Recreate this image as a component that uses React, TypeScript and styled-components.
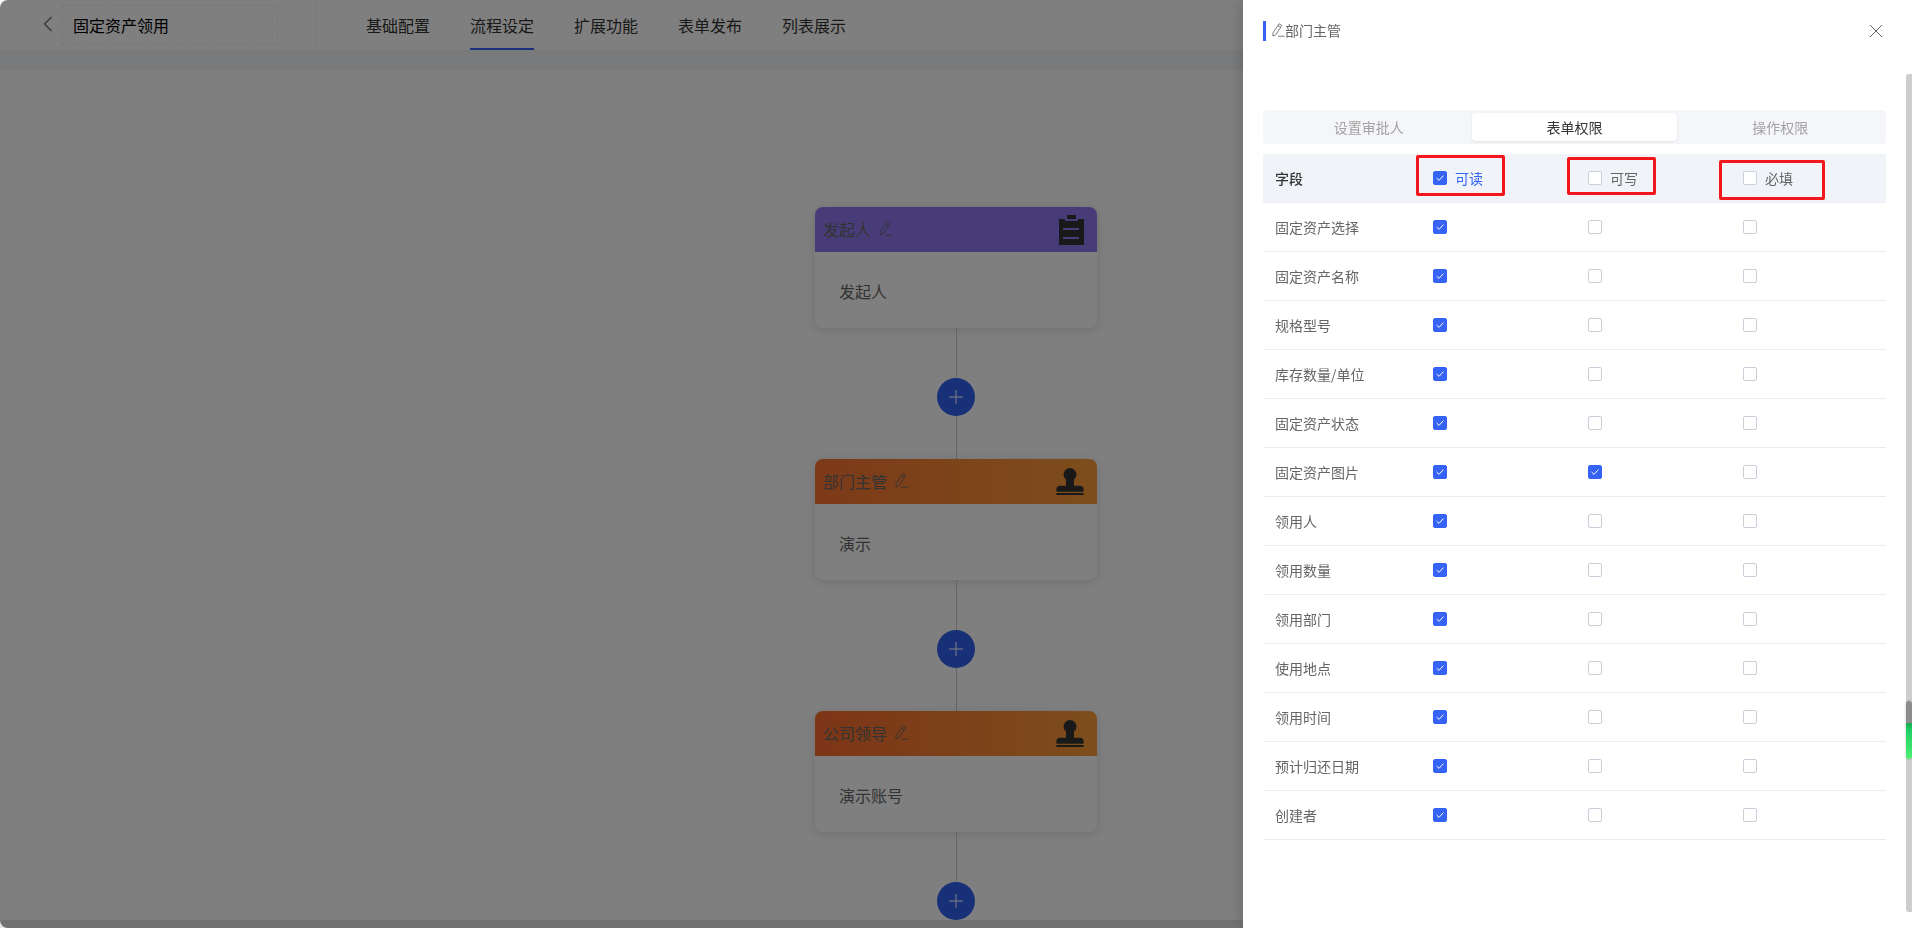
import React from 'react';
import styled, { createGlobalStyle } from 'styled-components';

const GlobalStyle = createGlobalStyle`
    html, body {
        margin: 0;
        padding: 0;
        height: 100%;
        overflow: hidden;
        background: #fff;
        font-family: "Noto Sans CJK SC", "Noto Sans", sans-serif;
    }
    * {
        box-sizing: border-box;
    }
`;

const PageContainer = styled.div`
    width: 1912px;
    height: 928px;
    display: flex;
    flex-direction: column;
    overflow: hidden;
    background: #fff;
`;

const TopBar = styled.div`
    height: 50px;
    display: flex;
    background: #fff;
    flex-shrink: 0;
`;

const BackArea = styled.div`
    width: 317px;
    display: flex;
    align-items: center;
    padding: 0 0 0 43px;
    gap: 9px;
    border-right: 1px solid #f0f0f0;
`;

const BackIcon = styled.svg`
    width: 10px;
    height: 16px;
    margin-top: -2px;
`;

const TitleBox = styled.div`
    width: 216px;
    height: 40px;
    border: 1px dashed #efefef;
    display: flex;
    align-items: center;
    padding: 0 0 1px 10px;
    color: #000;
    font-size: 16px;
`;

const NavList = styled.div`
    display: flex;
    gap: 40px;
    padding-left: 49px;
`;

const NavItem = styled.div<{ $active?: boolean }>`
    height: 50px;
    width: 64px;
    font-size: 16px;
    line-height: 50px;
    white-space: nowrap;
    color: #333;
    border-bottom: 2px solid ${(p) => (p.$active ? '#3563f5' : 'transparent')};
`;

const Strip = styled.div`
    height: 20px;
    background: #f0f4f6;
    flex-shrink: 0;
`;

const Canvas = styled.div`
    flex: 1;
    overflow: hidden;
    display: flex;
    flex-direction: column;
    align-items: center;
    padding-top: 137px;
`;

const HScrollBar = styled.div`
    height: 8px;
    background: #e2e2e2;
    flex-shrink: 0;
`;

const NodeCard = styled.div`
    width: 282px;
    height: 121px;
    flex-shrink: 0;
    border-radius: 8px;
    background: #fff;
    box-shadow: 0 2px 12px rgba(0, 0, 0, 0.14);
    overflow: hidden;
`;

const NodeHead = styled.div<{ $from: string; $to: string }>`
    height: 45px;
    display: flex;
    align-items: center;
    justify-content: space-between;
    padding: 0 13px 0 8px;
    background: linear-gradient(90deg, ${(p) => p.$from}, ${(p) => p.$to});
`;

const NodeTitle = styled.div`
    display: flex;
    align-items: center;
    gap: 8px;
    padding-bottom: 2px;
    font-size: 16px;
    color: #666;
`;

const NodeBody = styled.div`
    height: 76px;
    display: flex;
    align-items: center;
    padding: 2px 0 0 24px;
    font-size: 16px;
    color: #666;
`;

const Line = styled.div<{ $h: number }>`
    width: 1px;
    height: ${(p) => p.$h}px;
    background: #c9c9d6;
    flex-shrink: 0;
`;

const AddButton = styled.div`
    width: 38px;
    height: 38px;
    flex-shrink: 0;
    border-radius: 50%;
    background: #3060ee;
    display: flex;
    align-items: center;
    justify-content: center;
`;

const Mask = styled.div`
    position: fixed;
    inset: 0;
    border-radius: 8px 0 0 8px;
    background: rgba(0, 0, 0, 0.5);
`;

const Drawer = styled.div`
    position: fixed;
    top: 0;
    right: 0;
    bottom: 0;
    width: 669px;
    background: #fff;
    padding: 21px 26px 0 20px;
    box-shadow: -4px 0 12px rgba(0, 0, 0, 0.12);
`;

const DrawerHead = styled.div`
    height: 20px;
    display: flex;
    align-items: center;
    justify-content: space-between;
    border-left: 3px solid #3563f5;
    padding-left: 6px;
    margin-bottom: 69px;
`;

const DrawerTitle = styled.div`
    display: flex;
    align-items: center;
    padding-bottom: 2px;
    font-size: 14px;
    color: #666;
`;

const CloseIcon = styled.svg`
    width: 14px;
    height: 14px;
    margin-right: 3px;
`;

const TabsBar = styled.div`
    height: 34px;
    display: grid;
    grid-template-columns: repeat(3, 1fr);
    padding: 3px;
    border-radius: 4px;
    background: #f5f6f9;
    margin-bottom: 10px;
`;

const TabItem = styled.div<{ $active?: boolean }>`
    display: flex;
    align-items: center;
    justify-content: center;
    font-size: 14px;
    border-radius: 4px;
    color: ${(p) => (p.$active ? '#333' : '#a3a3a3')};
    background: ${(p) => (p.$active ? '#fff' : 'transparent')};
    box-shadow: ${(p) => (p.$active ? '0 1px 3px rgba(0, 0, 0, 0.08)' : 'none')};
`;

const TableRow = styled.div<{ $head?: boolean }>`
    height: 49px;
    display: grid;
    grid-template-columns: 158px 155px 156px 154px;
    align-items: center;
    font-size: 14px;
    color: #666;
    background: ${(p) => (p.$head ? '#f0f4f9' : '#fff')};
    border-bottom: 1px solid #ebecf2;
`;

const FieldName = styled.div<{ $head?: boolean }>`
    padding-left: 12px;
    color: ${(p) => (p.$head ? '#333' : '#666')};
    font-weight: ${(p) => (p.$head ? 500 : 400)};
`;

const CheckCell = styled.div<{ $on?: boolean; $shift?: boolean }>`
    display: flex;
    align-items: center;
    gap: 8px;
    padding-left: ${(p) => (p.$shift ? 11 : 12)}px;
    color: ${(p) => (p.$on ? '#3563f5' : '#666')};
`;

const CheckBox = styled.span<{ $on?: boolean }>`
    width: 14px;
    height: 14px;
    border-radius: 2px;
    display: inline-flex;
    align-items: center;
    justify-content: center;
    background: ${(p) => (p.$on ? '#3563f5' : '#fff')};
    border: 1px solid ${(p) => (p.$on ? '#3563f5' : '#ccced9')};
`;

const RedBox = styled.div<{ $x: number; $y: number; $w: number; $h: number }>`
    position: absolute;
    left: ${(p) => p.$x}px;
    top: ${(p) => p.$y}px;
    width: ${(p) => p.$w}px;
    height: ${(p) => p.$h}px;
    border: 3px solid #f5151a;
    border-radius: 2px;
`;

const ScrollTrack = styled.div`
    position: absolute;
    top: 74px;
    right: 0;
    bottom: 16px;
    width: 6px;
    background: #cdcdcd;
    border-radius: 3px 0 0 3px;
`;

const ScrollThumb = styled.div`
    position: absolute;
    top: 627px;
    left: 0;
    width: 6px;
    height: 58px;
    border-radius: 3px;
    overflow: hidden;
    background: linear-gradient(180deg, #8c8c8c 0, #8c8c8c 38%, #17a850 38%, #1fcf66 50%, #4df070 100%);
    box-shadow: 0 0 3px rgba(0, 0, 0, 0.2);
`;

const PencilIcon: React.FC<{ size?: number; color?: string }> = ({ size = 14, color = '#666' }) => (
    <svg width={size} height={size + 1} viewBox="0 0 14 15" fill="none" stroke={color} strokeWidth="0.9">
        <path d="M7.6 0.8 L10.6 2.6 L4.2 12.6 L1 14 L1 10.6 Z" strokeLinejoin="round" />
        <path d="M6.3 2.8 L9.3 4.6" />
        <path d="M6.5 14.2 H13.6" />
    </svg>
);

const ClipboardIcon: React.FC = () => (
    <svg width="25" height="30" viewBox="0 0 25 30">
        <rect x="8" y="0" width="9" height="4" rx="0.5" fill="#333" />
        <path
            fill="#333"
            fillRule="evenodd"
            d="M0 4 H6 V6 H19 V4 H25 V30 H0 Z M4 13 V15 H20 V13 Z M4 22 V24 H20 V22 Z"
        />
    </svg>
);

const StampIcon: React.FC = () => (
    <svg width="28" height="28" viewBox="0 0 28 28" fill="#333">
        <circle cx="14" cy="6.5" r="6.5" />
        <rect x="10" y="8" width="8" height="11" />
        <path d="M4 17.7 H24 C26.2 17.7 27.6 19.2 27.6 21 V23.7 H0.4 V21 C0.4 19.2 1.8 17.7 4 17.7 Z" />
        <rect x="0.4" y="25" width="27.2" height="2" />
    </svg>
);

const CheckMark: React.FC = () => (
    <svg width="10" height="10" viewBox="0 0 10 10" fill="none" stroke="#fff" strokeWidth="1">
        <path d="M1.6 5 L4 7.4 L8.4 2.6" />
    </svg>
);

const fields = [
    { name: '固定资产选择' },
    { name: '固定资产名称' },
    { name: '规格型号' },
    { name: '库存数量/单位' },
    { name: '固定资产状态' },
    { name: '固定资产图片', write: true },
    { name: '领用人' },
    { name: '领用数量' },
    { name: '领用部门' },
    { name: '使用地点' },
    { name: '领用时间' },
    { name: '预计归还日期' },
    { name: '创建者' },
];

const nodes = [
    { title: '发起人', body: '发起人', from: '#9078f0', to: '#9078f0', icon: <ClipboardIcon /> },
    { title: '部门主管', body: '演示', from: '#fa7432', to: '#fa9c38', icon: <StampIcon /> },
    { title: '公司领导', body: '演示账号', from: '#fa6a2e', to: '#fa9c38', icon: <StampIcon /> },
];

const App: React.FC = () => {
    return (
        <>
            <GlobalStyle />
            <PageContainer>
                <TopBar>
                    <BackArea>
                        <BackIcon viewBox="0 0 10 16" fill="none" stroke="#666" strokeWidth="1.2">
                            <path d="M8.5 1 L1.5 8 L8.5 15" />
                        </BackIcon>
                        <TitleBox>固定资产领用</TitleBox>
                    </BackArea>
                    <NavList>
                        <NavItem>基础配置</NavItem>
                        <NavItem $active>流程设定</NavItem>
                        <NavItem>扩展功能</NavItem>
                        <NavItem>表单发布</NavItem>
                        <NavItem>列表展示</NavItem>
                    </NavList>
                </TopBar>
                <Strip />
                <Canvas>
                    {nodes.map((node) => (
                        <React.Fragment key={node.title}>
                            <NodeCard>
                                <NodeHead $from={node.from} $to={node.to}>
                                    <NodeTitle>
                                        {node.title}
                                        <PencilIcon />
                                    </NodeTitle>
                                    {node.icon}
                                </NodeHead>
                                <NodeBody>{node.body}</NodeBody>
                            </NodeCard>
                            <Line $h={50} />
                            <AddButton>
                                <svg width="14" height="14" viewBox="0 0 14 14" stroke="#fff" strokeWidth="1">
                                    <path d="M7 0 V14 M0 7 H14" />
                                </svg>
                            </AddButton>
                            <Line $h={43} />
                        </React.Fragment>
                    ))}
                </Canvas>
                <HScrollBar />
            </PageContainer>
            <Mask />
            <Drawer>
                <DrawerHead>
                    <DrawerTitle>
                        <PencilIcon size={13} />
                        部门主管
                    </DrawerTitle>
                    <CloseIcon viewBox="0 0 14 14" fill="none" stroke="#666" strokeWidth="1">
                        <path d="M1 1 L13 13 M13 1 L1 13" />
                    </CloseIcon>
                </DrawerHead>
                <TabsBar>
                    <TabItem>设置审批人</TabItem>
                    <TabItem $active>表单权限</TabItem>
                    <TabItem>操作权限</TabItem>
                </TabsBar>
                <TableRow $head>
                    <FieldName $head>字段</FieldName>
                    <CheckCell $on>
                        <CheckBox $on><CheckMark /></CheckBox>
                        可读
                    </CheckCell>
                    <CheckCell>
                        <CheckBox />
                        可写
                    </CheckCell>
                    <CheckCell $shift>
                        <CheckBox />
                        必填
                    </CheckCell>
                </TableRow>
                {fields.map((field) => (
                    <TableRow key={field.name}>
                        <FieldName>{field.name}</FieldName>
                        <CheckCell>
                            <CheckBox $on><CheckMark /></CheckBox>
                        </CheckCell>
                        <CheckCell>
                            <CheckBox $on={field.write}>{field.write && <CheckMark />}</CheckBox>
                        </CheckCell>
                        <CheckCell $shift>
                            <CheckBox />
                        </CheckCell>
                    </TableRow>
                ))}
                <RedBox $x={173} $y={155} $w={89} $h={41} />
                <RedBox $x={324} $y={157} $w={89} $h={38} />
                <RedBox $x={476} $y={160} $w={106} $h={40} />
                <ScrollTrack>
                    <ScrollThumb />
                </ScrollTrack>
            </Drawer>
        </>
    );
};

export default App;
